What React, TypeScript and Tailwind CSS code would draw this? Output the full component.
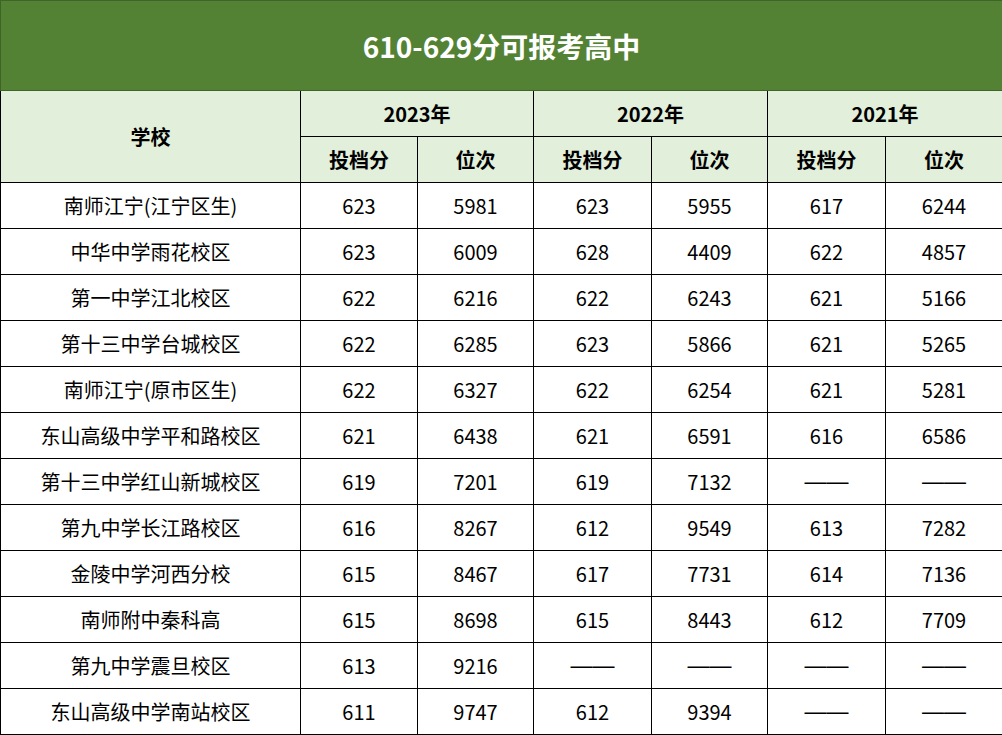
const rows: [string, string, string, string, string, string, string][] = [
  ["南师江宁(江宁区生)", "623", "5981", "623", "5955", "617", "6244"],
  ["中华中学雨花校区", "623", "6009", "628", "4409", "622", "4857"],
  ["第一中学江北校区", "622", "6216", "622", "6243", "621", "5166"],
  ["第十三中学台城校区", "622", "6285", "623", "5866", "621", "5265"],
  ["南师江宁(原市区生)", "622", "6327", "622", "6254", "621", "5281"],
  ["东山高级中学平和路校区", "621", "6438", "621", "6591", "616", "6586"],
  ["第十三中学红山新城校区", "619", "7201", "619", "7132", "——", "——"],
  ["第九中学长江路校区", "616", "8267", "612", "9549", "613", "7282"],
  ["金陵中学河西分校", "615", "8467", "617", "7731", "614", "7136"],
  ["南师附中秦科高", "615", "8698", "615", "8443", "612", "7709"],
  ["第九中学震旦校区", "613", "9216", "——", "——", "——", "——"],
  ["东山高级中学南站校区", "611", "9747", "612", "9394", "——", "——"],
];

const years = ["2023年", "2022年", "2021年"];

export default function App() {
  return (
    <div
      className="w-[1002px] h-[735px] overflow-hidden bg-white text-black"
      style={{ fontFamily: '"Noto Sans CJK SC", "Noto Sans", sans-serif' }}
    >
      <table className="w-[1002px] table-fixed border-collapse text-[20px]">
        <colgroup>
          <col className="w-[300px]" />
          <col className="w-[117px]" />
          <col className="w-[116px]" />
          <col className="w-[118px]" />
          <col className="w-[116px]" />
          <col className="w-[118px]" />
          <col className="w-[117px]" />
        </colgroup>
        <thead>
          <tr className="h-[90px]">
            <th
              colSpan={7}
              className="border border-[#3f6428] bg-[#548235] text-[28px] font-bold text-white"
            >
              610-629分可报考高中
            </th>
          </tr>
          <tr className="h-[46px] bg-[#e2efda]">
            <th rowSpan={2} className="border border-black font-bold">
              学校
            </th>
            {years.map((y) => (
              <th key={y} colSpan={2} className="border border-black font-bold">
                {y}
              </th>
            ))}
          </tr>
          <tr className="h-[46px] bg-[#e2efda]">
            {years.map((y) => (
              <>
                <th key={y + "a"} className="border border-black font-bold">
                  投档分
                </th>
                <th key={y + "b"} className="border border-black font-bold">
                  位次
                </th>
              </>
            ))}
          </tr>
        </thead>
        <tbody>
          {rows.map((r) => (
            <tr key={r[0]} className="h-[46px]">
              {r.map((c, i) => (
                <td key={i} className="border border-black p-0 text-center font-normal">
                  {c === "——" ? (
                    <span
                      className="text-[22px]"
                      style={{ fontFamily: '"Liberation Sans", sans-serif' }}
                    >
                      {c}
                    </span>
                  ) : (
                    c
                  )}
                </td>
              ))}
            </tr>
          ))}
        </tbody>
      </table>
    </div>
  );
}
